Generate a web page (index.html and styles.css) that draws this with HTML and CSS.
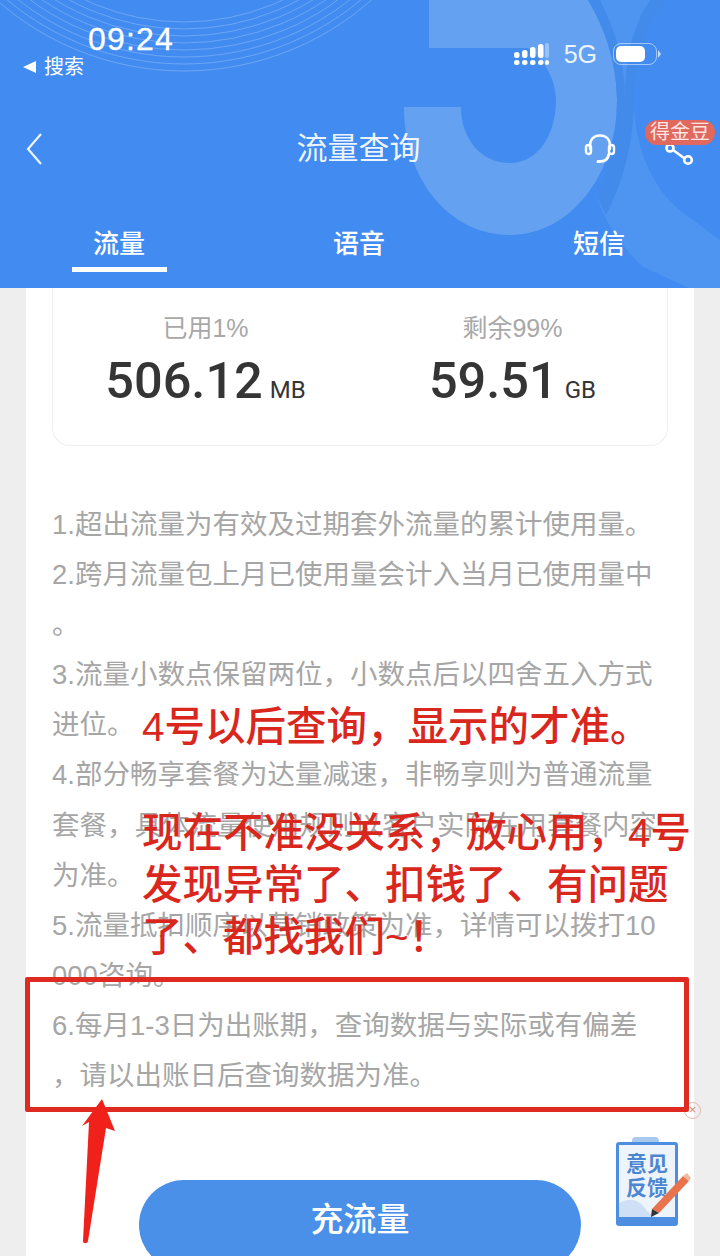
FILE: index.html
```html
<!DOCTYPE html>
<html lang="zh-CN">
<head>
    <meta charset="UTF-8">
    <meta name="viewport" content="width=device-width, initial-scale=1.0">
    <title>流量查询</title>
    <link rel="stylesheet" href="styles.css">
</head>
<body>
    <div id="app">
        <header class="header">
            <svg class="header-bg" width="720" height="288" viewBox="0 0 720 288">
                <g fill="none" stroke="#fff" stroke-opacity="0.22" stroke-width="1">
                    <circle cx="184" cy="-212" r="283"/>
                    <circle cx="184" cy="-212" r="276"/>
                    <circle cx="184" cy="-212" r="269"/>
                    <circle cx="184" cy="-212" r="262"/>
                    <circle cx="184" cy="-212" r="255"/>
                    <circle cx="184" cy="-212" r="248"/>
                    <circle cx="184" cy="-212" r="241"/>
                    <circle cx="184" cy="-212" r="234"/>
                </g>
                <path fill="#64a2f1" d="M429 0H588C606 30 617 65 617 100C617 175 570 235 510 235C450 235 404 180 404 107H461C461 140 482 163 510 163C538 163 556 135 556 100C556 82 546 60 528 48H429Z"/>
                <path fill="#4f96f1" d="M666 0C644 30 634 65 634 100C634 150 655 195 689 217L720 240V288H689L643 267C620 245 605 222 597 197C610 165 617 135 617 100C617 65 606 30 588 0Z" opacity="0.9"/>
                <path fill="#3c85e8" d="M588 0C606 30 617 65 617 100C617 135 610 165 597 197L606 215C624 180 634 140 634 100C634 65 644 30 666 0H650C630 30 625 65 625 100C625 60 615 30 600 0Z" opacity="0.6"/>
            </svg>

            <div class="status">
                <div class="status-left">
                    <div class="time">09:24</div>
                    <div class="back-app"><i class="back-arrow"></i>搜索</div>
                </div>
                <div class="status-right">
                    <svg width="36" height="22" viewBox="0 0 36 22" fill="#fff">
                        <rect x="0" y="9" width="5.500" height="6" rx="2.500"/>
                        <rect x="0" y="17" width="5.500" height="5" rx="2.500"/>
                        <rect x="8" y="7" width="5.500" height="8" rx="2.500"/>
                        <rect x="8" y="17" width="5.500" height="5" rx="2.500"/>
                        <rect x="16" y="4" width="5.500" height="11" rx="2.500"/>
                        <rect x="16" y="17" width="5.500" height="5" rx="2.500"/>
                        <rect x="24" y="1" width="5.500" height="14" rx="2.500"/>
                        <rect x="24" y="17" width="5.500" height="5" rx="2.500"/>
                        <rect x="31" y="0" width="4" height="15" rx="2" fill-opacity="0.35"/>
                        <rect x="31" y="17" width="4" height="5" rx="2"/>
                    </svg>
                    <span class="net">5G</span>
                    <div class="battery"><div class="battery-fill"></div></div>
                    <i class="battery-nub"></i>
                </div>
            </div>

            <div class="nav">
                <svg class="nav-back" width="16" height="32" viewBox="0 0 16 32">
                    <path d="M15 1L2 16L15 31" fill="none" stroke="#fff" stroke-opacity="0.9" stroke-width="2.2"/>
                </svg>
                <div class="nav-title">流量查询</div>
                <svg class="nav-headset" width="32" height="30" viewBox="0 0 32 30" fill="none" stroke="#fff" stroke-width="2.4" stroke-linecap="round">
                    <path d="M6 15V12C6 5 10 1.500 16 1.500C22 1.500 26 5 26 12V15"/>
                    <rect x="2" y="11" width="5" height="9" rx="2.500"/>
                    <rect x="25" y="11" width="5" height="9" rx="2.500"/>
                    <path d="M25 20C24 25 22 27.500 14 27.500" stroke-width="3"/>
                </svg>
                <svg class="nav-share" width="32" height="24" viewBox="0 0 32 24" fill="none" stroke="#fff" stroke-width="2.600">
                    <circle cx="7" cy="6" r="3.500"/>
                    <circle cx="25" cy="18" r="3.800"/>
                    <path d="M10 8L21 16"/>
                </svg>
                <div class="badge">得金豆</div>
            </div>

            <nav class="tabs">
                <div class="tab tab-active">流量</div>
                <div class="tab">语音</div>
                <div class="tab">短信</div>
            </nav>
        </header>

        <main class="panel">
            <section class="card">
                <div class="stat">
                    <div class="stat-label">已用1%</div>
                    <div class="stat-value">506.12<small>MB</small></div>
                </div>
                <div class="stat">
                    <div class="stat-label">剩余99%</div>
                    <div class="stat-value">59.51<small>GB</small></div>
                </div>
            </section>

            <section class="notes">
                <p>1.超出流量为有效及过期套外流量的累计使用量。</p>
                <p>2.跨月流量包上月已使用量会计入当月已使用量中。</p>
                <p>3.流量小数点保留两位，小数点后以四舍五入方式进位。</p>
                <p>4.部分畅享套餐为达量减速，非畅享则为普通流量套餐，具体流量使用规则以客户实际在用套餐内容为准。</p>
                <p>5.流量抵扣顺序以营销政策为准，详情可以拨打10000咨询。</p>
                <p>6.每月1-3日为出账期，查询数据与实际或有偏差，请以出账日后查询数据为准。</p>
            </section>

            <div class="charge">充流量</div>
        </main>

        <div class="feedback">
            <svg width="78" height="92" viewBox="0 0 78 92">
                <rect x="17" y="0" width="27" height="9" rx="4" fill="#a9c8ee"/>
                <rect x="1" y="5" width="62" height="84" rx="3" fill="#4e8ee0"/>
                <rect x="4" y="8" width="56" height="72" fill="#eef4fc"/>
                <path d="M4 80V66C16 60 24 62 32 74L40 80Z" fill="#cfe0f6"/>
                <text x="32" y="34" class="feedback-text">意见</text>
                <text x="32" y="58" class="feedback-text">反馈</text>
                <path d="M68 39L74 44L44 76L37 72Z" fill="#e8734d"/>
                <path d="M68 39L72 36L76 41L74 44Z" fill="#f2b8a0"/>
                <path d="M37 72L44 76L36 80Z" fill="#333"/>
            </svg>
        </div>
        <div class="close-dot">×</div>

        <!-- red marks drawn over the page -->
        <div class="mark-box"></div>
        <div class="mark-text mark-one">4号以后查询，显示的才准。</div>
        <div class="mark-text mark-two">现在不准没关系，放心用，4号<br>发现异常了、扣钱了、有问题<br>了、都找我们~！</div>
        <svg class="mark-arrow" width="40" height="150" viewBox="0 0 40 150">
            <path d="M22 1L35 33L26 30L8 143C7.500 146 3 146 3 143L9 24L2 28Z" fill="#f0201a"/>
        </svg>
    </div>
</body>
</html>
```

FILE: styles.css
```css
* {
    box-sizing: border-box;
}

html, body {
    margin: 0;
    height: 1256px;
    overflow: hidden;
}

body {
    font-family: "Liberation Sans", "Noto Sans CJK SC", sans-serif;
    background-color: #eeeeee;
}

#app {
    position: relative;
    width: 720px;
    height: 1256px;
    overflow: hidden;
}

/* header */
.header {
    position: relative;
    height: 288px;
    background: #428cf1;
    color: #fff;
    padding-top: 22px;
}

.header-bg {
    position: absolute;
    left: 0;
    top: 0;
}

.status {
    position: relative;
    display: flex;
    justify-content: space-between;
    height: 56px;
    padding: 0 63px 0 23px;
}

.time {
    font-size: 32px;
    line-height: 34px;
    letter-spacing: 1.200px;
    margin-left: 65px;
    -webkit-text-stroke: 0.300px #fff;
}

.back-app {
    display: flex;
    align-items: center;
    font-size: 20px;
    line-height: 24px;
    margin-top: -1px;
}

.back-arrow {
    width: 0;
    height: 0;
    border-top: 6px solid transparent;
    border-bottom: 6px solid transparent;
    border-right: 13px solid #fff;
    margin-right: 8px;
}

.status-right {
    display: flex;
    align-items: center;
    height: 22px;
    margin-top: 21px;
    position: relative;
}

.net {
    font-size: 25px;
    color: rgba(255, 255, 255, 0.9);
    margin-left: 14px;
    margin-right: 16px;
}

.battery {
    width: 44px;
    height: 22px;
    border: 1.500px solid rgba(255, 255, 255, 0.5);
    border-radius: 8px;
    padding: 2px;
}

.battery-fill {
    width: 29px;
    height: 100%;
    background: #fff;
    border-radius: 5px;
}

.battery-nub {
    position: absolute;
    right: -4px;
    top: 7px;
    border-top: 4px solid transparent;
    border-bottom: 4px solid transparent;
    border-left: 3px solid rgba(255, 255, 255, 0.7);
}

.nav {
    position: relative;
    height: 70px;
    margin-top: 32px;
    display: flex;
    align-items: center;
    justify-content: center;
}

.nav-title {
    font-size: 31px;
    color: rgba(255, 255, 255, 0.92);
    margin-right: 3px;
}

.nav-back {
    position: absolute;
    left: 26px;
    top: 23px;
}

.nav-headset {
    position: absolute;
    left: 584px;
    top: 24px;
}

.nav-share {
    position: absolute;
    left: 663px;
    top: 32px;
}

.badge {
    position: absolute;
    left: 645px;
    top: 10px;
    width: 70px;
    height: 25px;
    line-height: 25px;
    text-align: center;
    font-size: 20px;
    background: #e0685f;
    border-radius: 12px;
    color: #fbe6e2;
}

.tabs {
    position: relative;
    display: grid;
    grid-template-columns: 240px 240px 240px;
    margin-top: 42px;
}

.tab {
    position: relative;
    height: 48px;
    line-height: 44px;
    text-align: center;
    font-size: 26px;
    font-weight: 500;
    padding-right: 2px;
}

.tab-active::after {
    content: "";
    position: absolute;
    left: 72px;
    top: 45px;
    width: 95px;
    height: 5px;
    background: #fff;
}

/* content */
.panel {
    width: 668px;
    height: 968px;
    margin-left: 26px;
    background: #fff;
    padding: 0 26px;
}

.card {
    display: grid;
    grid-template-columns: 1fr 1fr;
    height: 158px;
    padding-top: 26px;
    border: 1px solid #eeeeee;
    border-top: none;
    border-radius: 0 0 18px 18px;
}

.stat {
    text-align: center;
}

.stat-label {
    font-size: 25px;
    line-height: 28px;
    color: #a8a8a8;
    padding-right: 2px;
}

.stat-value {
    font-family: Roboto, "Liberation Sans", sans-serif;
    font-size: 50.500px;
    font-weight: 500;
    line-height: 60px;
    margin-top: 9px;
    color: #353535;
    padding-right: 2px;
}

.stat-value small {
    font-size: 24px;
    font-weight: 400;
    margin-left: 7px;
}

.notes {
    width: 606px;
    margin-top: 54px;
    font-size: 27.500px;
    line-height: 50.100px;
    color: #a6a6a6;
    word-break: break-all;
    line-break: anywhere;
}

.notes p {
    margin: 0;
}

.charge {
    width: 442px;
    height: 90px;
    margin: 79px 0 0 87px;
    line-height: 80px;
    text-align: center;
    font-size: 33px;
    font-weight: 500;
    color: #fff;
    background: #4a90e9;
    border-radius: 45px;
}

/* floating button */
.feedback {
    position: absolute;
    left: 615px;
    top: 1137px;
}

.feedback svg {
    display: block;
}

.feedback-text {
    font-size: 21px;
    font-weight: 700;
    fill: #4c86d2;
    text-anchor: middle;
}

.close-dot {
    position: absolute;
    left: 684px;
    top: 1102px;
    width: 17px;
    height: 17px;
    border: 1.500px solid #e8b5ac;
    border-radius: 50%;
    font-size: 13px;
    line-height: 13px;
    text-align: center;
    color: #d4877c;
}

/* red marks */
.mark-box {
    position: absolute;
    left: 25px;
    top: 977px;
    width: 664px;
    height: 135px;
    border: 5px solid #de2a20;
    border-radius: 2px;
}

.mark-text {
    position: absolute;
    left: 142px;
    font-size: 40.500px;
    font-weight: 500;
    color: #d9271e;
    white-space: nowrap;
}

.mark-one {
    top: 699px;
    line-height: 56px;
}

.mark-two {
    top: 807px;
    line-height: 52px;
}

.mark-arrow {
    position: absolute;
    left: 80px;
    top: 1098px;
}
```
